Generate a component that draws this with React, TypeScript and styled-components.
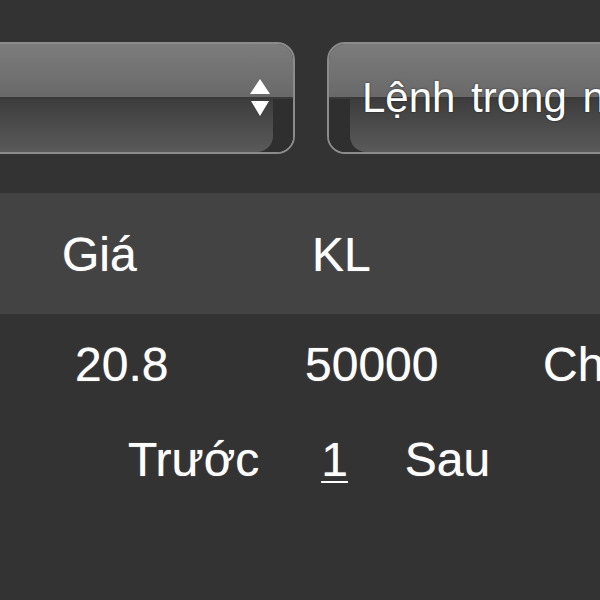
import React from 'react';
import styled, { createGlobalStyle } from 'styled-components';

const GlobalStyle = createGlobalStyle`
  html, body {
    margin: 0;
    padding: 0;
    background: #333333;
    overflow: hidden;
  }
  body {
    width: 600px;
    height: 600px;
    font-family: "Liberation Sans", Arial, sans-serif;
    color: #fff;
  }
`;

const Page = styled.div`
  width: 600px;
  height: 600px;
  overflow: hidden;
  background: #333333;
`;

const Toolbar = styled.div`
  display: flex;
  gap: 32px;
  padding-top: 42px;
  margin-left: -105px;
  width: 1000px;
`;

const SelectBox = styled.div<{ $width: number }>`
  display: grid;
  width: ${p => p.$width}px;
  height: 112px;
  box-sizing: border-box;
  border: 2px solid #8b8b8b;
  border-radius: 18px;
  overflow: hidden;
  background: #2f2f2f;
  flex-shrink: 0;
`;

const Gloss = styled.div`
  grid-area: 1 / 1;
  display: flex;
  flex-direction: column;
`;

const GlossTop = styled.div`
  height: 53px;
  background: linear-gradient(#7c7c7c, #696969);
  border-bottom: 2px solid #3a3a3a;
`;

const GlossBottom = styled.div<{ $side: 'left' | 'right' }>`
  flex: 1;
  display: flex;
  justify-content: ${p => (p.$side === 'right' ? 'flex-start' : 'flex-end')};
  background: #2f2f2f;
`;

const GlossFill = styled.div<{ $side: 'left' | 'right' }>`
  flex: 1;
  ${p => (p.$side === 'right' ? 'margin-right: 20px;' : 'margin-left: 21px;')}
  ${p =>
    p.$side === 'right'
      ? 'border-bottom-right-radius: 16px;'
      : 'border-bottom-left-radius: 16px;'}
  background: linear-gradient(#3d3d3d, #5a5a5a);
`;

const SelectContent = styled.div<{ $align: 'start' | 'end' }>`
  grid-area: 1 / 1;
  display: flex;
  align-items: center;
  justify-content: ${p => (p.$align === 'end' ? 'flex-end' : 'flex-start')};
  padding: 0 23px 0 33px;
  font-size: 42px;
  word-spacing: 4px;
  white-space: nowrap;
  text-shadow: 0 0 2px rgba(0, 0, 0, 0.7);
`;

const Arrows = () => (
  <svg width="20" height="38" viewBox="0 0 20 38">
    <polygon points="10,0 20,15 0,15" fill="#fff" />
    <polygon points="1,22 19,22 10,37" fill="#fff" />
  </svg>
);

const HeaderBand = styled.div`
  margin-top: 39px;
  background: #434343;
  display: grid;
  grid-template-columns: 250px 250px 1fr;
  padding: 38px 0 35px;
`;

const DataRow = styled.div`
  display: grid;
  grid-template-columns: 230px 238px 1fr;
  padding-top: 27px;
`;

const Cell = styled.div<{ $indent: number }>`
  padding-left: ${p => p.$indent}px;
  font-size: 48px;
  line-height: 48px;
  white-space: nowrap;
  text-shadow: 0 0 1px rgba(255, 255, 255, 0.6);
`;

const Pager = styled.div`
  display: flex;
  align-items: baseline;
  padding: 47px 0 0 128px;
  font-size: 48px;
  line-height: 48px;
  text-shadow: 0 0 1px rgba(255, 255, 255, 0.6);
`;

const PagerLink = styled.span<{ $gap: number }>`
  margin-left: ${p => p.$gap}px;
`;

const PageNumber = styled.span`
  margin-left: 62px;
  text-decoration: underline;
  text-decoration-thickness: 2px;
  text-underline-offset: 5px;
`;

const App = () => {
  return (
    <Page>
      <GlobalStyle />
      <Toolbar>
        <SelectBox $width={400}>
          <Gloss>
            <GlossTop />
            <GlossBottom $side="right">
              <GlossFill $side="right" />
            </GlossBottom>
          </Gloss>
          <SelectContent $align="end">
            <Arrows />
          </SelectContent>
        </SelectBox>
        <SelectBox $width={420}>
          <Gloss>
            <GlossTop />
            <GlossBottom $side="left">
              <GlossFill $side="left" />
            </GlossBottom>
          </Gloss>
          <SelectContent $align="start">Lệnh trong ngày</SelectContent>
        </SelectBox>
      </Toolbar>

      <HeaderBand>
        <Cell $indent={62}>Giá</Cell>
        <Cell $indent={62}>KL</Cell>
        <Cell $indent={62}></Cell>
      </HeaderBand>

      <DataRow>
        <Cell $indent={75}>20.8</Cell>
        <Cell $indent={75}>50000</Cell>
        <Cell $indent={75}>Chờ khớp</Cell>
      </DataRow>

      <Pager>
        <span>Trước</span>
        <PageNumber>1</PageNumber>
        <PagerLink $gap={57}>Sau</PagerLink>
      </Pager>
    </Page>
  );
};

export default App;
